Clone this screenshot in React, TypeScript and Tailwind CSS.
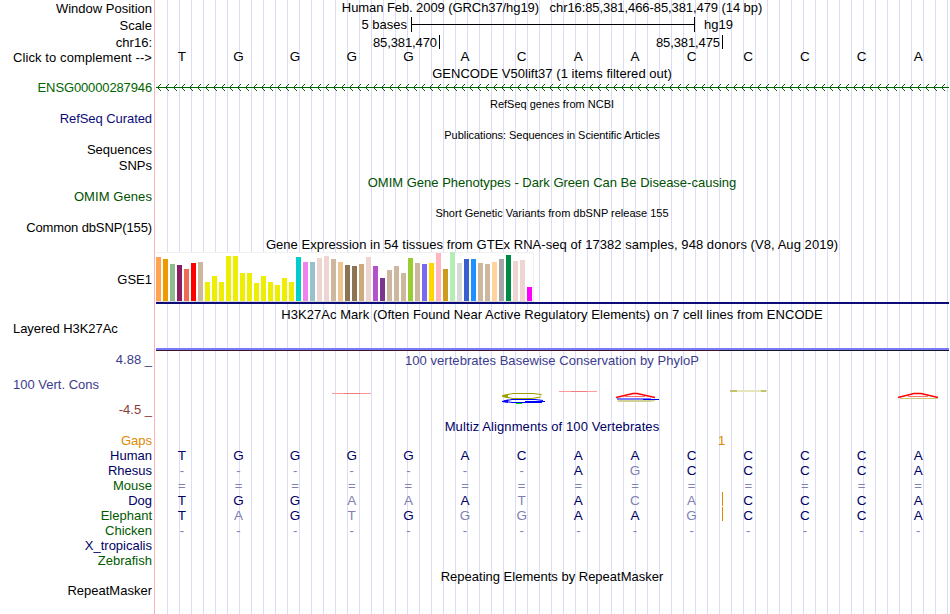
import React from "react";
import clsx from "clsx";

interface Label {
  text: string;
  className: string;
  left?: boolean;
}

// left side track labels, top to bottom
const labels: Label[] = [
  { text: "Window Position", className: "mt-px" },
  { text: "Scale", className: "mt-0.5" },
  { text: "chr16:", className: "mt-0.5" },
  { text: "Click to complement -->", className: "tracking-[0.09px]" },
  { text: "ENSG00000287946", className: "mt-[15px] tracking-[-0.13px] text-[#006400]" },
  { text: "RefSeq Curated", className: "mt-4 tracking-[-0.07px] text-[#0c0c78]" },
  { text: "Sequences", className: "mt-4" },
  { text: "SNPs", className: "mt-px" },
  { text: "OMIM Genes", className: "mt-4 tracking-[0.08px] text-[#005000]" },
  { text: "Common dbSNP(155)", className: "mt-4 tracking-[-0.12px]" },
  { text: "GSE1", className: "mt-[37px]" },
  { text: "Layered H3K27Ac", className: "mt-[34px] tracking-[-0.05px]", left: true },
  { text: "4.88 _", className: "mt-4 text-[#3c3c8c]" },
  { text: "100 Vert. Cons", className: "mt-2.5 text-[#3c3c8c]", left: true },
  { text: "-4.5 _", className: "mt-2.5 text-[#8c3c3c]" },
  { text: "Gaps", className: "mt-4 text-[#e18700]" },
  { text: "Human", className: "text-[#000064]" },
  { text: "Rhesus", className: "text-[#000064]" },
  { text: "Mouse", className: "text-[#005a00]" },
  { text: "Dog", className: "text-[#000064]" },
  { text: "Elephant", className: "text-[#005a00]" },
  { text: "Chicken", className: "text-[#005a00]" },
  { text: "X_tropicalis", className: "text-[#000064]" },
  { text: "Zebrafish", className: "text-[#005a00]" },
  { text: "RepeatMasker", className: "mt-[15px]" },
];

// [height, color] for each GTEx tissue
const tissues: [number, string][] = [
  [44, "#ffa54f"], [42, "#ee9a00"], [37, "#8fbc8f"], [36, "#8b1c62"], [32, "#ee6a50"], [38, "#ff0000"],
  [39, "#cdb79e"], [19, "#eeee00"], [25, "#eeee00"], [19, "#eeee00"], [45, "#eeee00"], [45, "#eeee00"],
  [28, "#eeee00"], [28, "#eeee00"], [18, "#eeee00"], [25, "#eeee00"], [19, "#eeee00"], [16, "#eeee00"],
  [23, "#eeee00"], [19, "#eeee00"], [44, "#00cdcd"], [39, "#ee82ee"], [39, "#9ac0cd"], [43, "#eed5d2"],
  [45, "#eed5d2"], [42, "#cdb79e"], [39, "#eec591"], [36, "#8b7355"], [35, "#8b7355"], [37, "#cdaa7d"],
  [44, "#eed5d2"], [35, "#b452cd"], [23, "#7a378b"], [31, "#cdb79e"], [35, "#cdb79e"], [28, "#cdb79e"],
  [43, "#9acd32"], [38, "#cdb79e"], [37, "#7b68ee"], [38, "#ffd700"], [48, "#ffb6c1"], [32, "#cd9b1d"],
  [49, "#b4eeb4"], [38, "#d9d9d9"], [42, "#3a5fcd"], [42, "#1e90ff"], [38, "#cdb79e"], [37, "#cdb79e"],
  [39, "#ffd39b"], [42, "#a6a6a6"], [46, "#008b45"], [40, "#eed5d2"], [41, "#eed5d2"], [14, "#ff00ff"],
];

// lower case = base differs from human
const alignments = [
  { name: "Human", bases: "TGGGGACAACCCCA" },
  { name: "Rhesus", bases: "-------AgCCCCA" },
  { name: "Mouse", bases: "==============" },
  { name: "Dog", bases: "TGGaaAtAcaCCCA", insert: true },
  { name: "Elephant", bases: "TaGtGggAAgCCCA", insert: true },
  { name: "Chicken", bases: "--------------" },
];

const Title = ({ text, className }: { text: string; className?: string }) => (
  <div className={clsx("h-[15px] pr-px text-center", className)}>{text}</div>
);

const SmallTitle = ({ text, className }: { text: string; className?: string }) => (
  <div className={clsx("h-[13px] pr-px text-center text-[11px] leading-[13px]", className)}>{text}</div>
);

const Bases = ({ bases }: { bases: string }) => (
  <div className="grid h-[15px] grid-cols-14 text-center text-[13.5px] leading-[15px]">
    {bases.split("").map((b, i) => (
      <span
        key={i}
        className={clsx("pr-[5px]", /[a-z=-]/.test(b) && "text-[#8080b2]", /[=-]/.test(b) && "text-[13px]")}
      >
        {b.toUpperCase()}
      </span>
    ))}
  </div>
);

const GeneArrows = () => (
  <svg className="mt-[3px] block" width="793" height="7" shapeRendering="crispEdges">
    <rect x="0" y="3" width="793" height="1" fill="#006400" />
    {Array.from({ length: 99 }, (_, i) => (
      <path
        key={i}
        transform={`translate(${1 + i * 8} 0)`}
        d="M0 3h1v1h-1zM1 2h1v1h-1zM2 1h1v1h-1zM3 0h1v1h-1zM1 4h1v1h-1zM2 5h1v1h-1zM3 6h1v1h-1z"
        fill="#006400"
      />
    ))}
  </svg>
);

const Conservation = () => (
  <svg className="mt-[18px] block" width="793" height="20" viewBox="156 386 793 20" fill="none">
    <path d="M332 393.5h39" stroke="#ff9c9c" />
    <path d="M344 393.5h16" stroke="#f07c7c" />
    {/* C */}
    <path d="M541 395.5v-1l-8-1h-20l-10 2v1l10 2h19l9-1.5" stroke="#a0a000" strokeWidth="1.1" />
    <path d="M502 395.5l6-1.5v4l-6-1.5z" fill="#a0a000" />
    <path d="M545 401.5h-20M543 400.5l-8-1h-23l-8 1.5 8 1.5h30" stroke="#0000ff" strokeWidth="1.1" />
    <path d="M502 401l6-1.5v3.5l-6-1z" fill="#0000ff" />
    <path d="M516 403.5h6" stroke="#00e000" />
    <path d="M559 391.5h38" stroke="#ff9c9c" />
    <path d="M571 391.5h16" stroke="#f07c7c" />
    {/* A */}
    <path d="M618 400.5h37l-5 1h-32z" stroke="#d2d296" />
    <path d="M617 399.5h40M617 398.5h34" stroke="#7c7cff" />
    <path d="M643 399.5h16" stroke="#0000ff" />
    <path d="M616 397.5l17-4h4l18 4" stroke="#ff0000" strokeWidth="1.5" />
    <path d="M625 396.5h20" stroke="#ff7070" />
    <path d="M730 390.5h37M732 391.5h36" stroke="#e6e6bc" />
    <path d="M730 391h7M761 391h5" stroke="#b8b850" strokeWidth="1.5" />
    {/* A */}
    <path d="M900 398.5h37" stroke="#c8c878" />
    <path d="M898 397.5l16-4h7l17 4" stroke="#ff0000" strokeWidth="1.5" />
    <path d="M908 396.5h20" stroke="#ff7070" />
  </svg>
);

const App: React.FC = () => {
  return (
    <div className="flex h-[614px] w-[950px] overflow-hidden bg-white font-['Liberation_Sans',Arial,sans-serif] text-[13px] leading-[15px] whitespace-pre text-black">
      {/* LABELS */}
      <div className="w-[155px] shrink-0 border-r border-[#ffb4b4]">
        {labels.map((l) => (
          <div key={l.text} className={clsx("h-[15px]", l.left ? "pl-[13px]" : "pr-0.5 text-right", l.className)}>
            {l.text}
          </div>
        ))}
      </div>

      {/* TRACKS */}
      <div className="ml-px w-[793px] shrink-0 bg-[repeating-linear-gradient(90deg,transparent_0,transparent_11px,#dcdcf8_11px,#dcdcf8_12px)]">
        <Title
          text="Human Feb. 2009 (GRCh37/hg19)   chr16:85,381,466-85,381,479 (14 bp)"
          className="tracking-[-0.08px]"
        />

        <div className="mt-0.5 flex h-[15px]">
          <span className="w-[255px] pr-1 text-right">5 bases</span>
          <div className="flex w-[284px] items-center border-x border-black">
            <div className="h-px w-full bg-black" />
          </div>
          <span className="pl-[9px]">hg19</span>
        </div>

        <div className="mt-[3px] flex h-3.5 text-right tracking-[-0.1px]">
          <span className="w-[284px] border-r border-black pr-0.5">85,381,470</span>
          <span className="w-[283px] border-r border-black pr-0.5">85,381,475</span>
        </div>

        <Bases bases="TGGGGACAACCCCA" />
        <Title text="GENCODE V50lift37 (1 items filtered out)" className="mt-0.5 tracking-[0.03px]" />
        <GeneArrows />
        <SmallTitle text="RefSeq genes from NCBI" className="mt-[7px]" />
        <SmallTitle
          text="Publications: Sequences in Scientific Articles"
          className="mt-[18px] tracking-[-0.05px]"
        />
        <Title text="OMIM Gene Phenotypes - Dark Green Can Be Disease-causing" className="mt-[33px] text-[#005000]" />
        <SmallTitle text="Short Genetic Variants from dbSNP release 155" className="mt-[17px]" />
        <Title
          text="Gene Expression in 54 tissues from GTEx RNA-seq of 17382 samples, 948 donors (V8, Aug 2019)"
          className="mt-[17px] tracking-[0.055px]"
        />

        {/* GTEX */}
        <div className="flex h-[50px] w-[378px] items-end gap-0.5 border-t border-r border-b border-t-[#f0f0f0] border-r-[#f0f0f0] border-b-[#d8d8d8] bg-white">
          {tissues.map(([h, color], i) => (
            <div key={i} className="w-[5px] shrink-0" style={{ height: h, backgroundColor: color }} />
          ))}
        </div>
        <div className="h-0.5 bg-[#0c0c78]" />

        <Title
          text="H3K27Ac Mark (Often Found Near Active Regulatory Elements) on 7 cell lines from ENCODE"
          className="mt-[3px] tracking-[0.045px]"
        />
        <div className="mt-[26px] h-0.5 bg-[#7878f8]" />
        <div className="flex h-px bg-[#141432]">
          <div className="w-[565px] bg-[#3c1432]" />
        </div>

        <Title
          text="100 vertebrates Basewise Conservation by PhyloP"
          className="mt-0.5 tracking-[0.04px] text-[#3c3c8c]"
        />
        <Conservation />

        {/* MULTIZ */}
        <Title
          text="Multiz Alignments of 100 Vertebrates"
          className="mt-[13px] -mb-px tracking-[0.1px] text-[#000064]"
        />
        <div className="h-[15px] pl-[562px] text-[#e18700]">1</div>
        {alignments.map((a) => (
          <div key={a.name} className="relative text-[#000064]">
            <Bases bases={a.bases} />
            {a.insert && <div className="absolute top-[-1px] left-[566px] h-3.5 w-px bg-[#e18700]" />}
          </div>
        ))}

        <Title text="Repeating Elements by RepeatMasker" className="mt-[31px]" />
      </div>
    </div>
  );
};

export default App;
